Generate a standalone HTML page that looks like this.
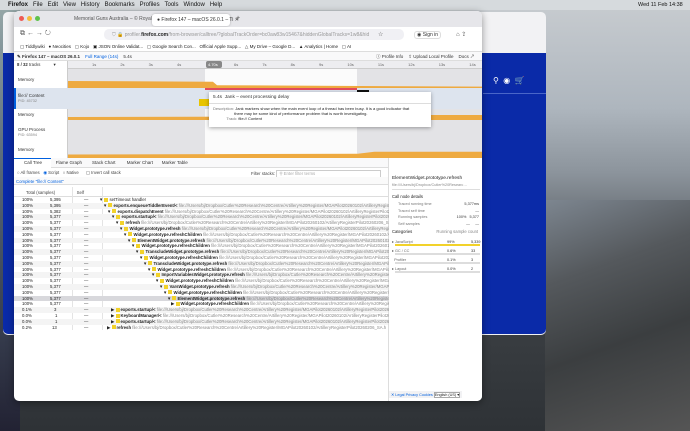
<!DOCTYPE html><html><head><meta charset="utf-8"><style>
*{margin:0;padding:0;box-sizing:border-box}
body{width:690px;height:431px;overflow:hidden;position:relative;font-family:"Liberation Sans",sans-serif;background:#3a3f44}
.a{position:absolute}
.t{font-size:5px;color:#333;white-space:nowrap}
.row{position:absolute;left:0;width:374px;height:5.8px;font-size:4.3px;line-height:5.8px;white-space:nowrap;color:#222}
.row span{position:absolute}
.sq{display:inline-block;width:4px;height:4px;background:#f2d22a;vertical-align:-0.5px;margin-right:1px}
.path{color:#888}
</style></head><body>
<div class="a" style="left:0;top:0;width:690px;height:431px;background:linear-gradient(180deg,#c8ccd0 0%,#aeb6be 25%,#8c949c 40%,#5e646a 55%,#3a3e42 75%,#2e3236 100%)"></div>
<div class="a" style="left:545px;top:200px;width:145px;height:231px;background:linear-gradient(160deg,#7d8690 0%,#55595d 30%,#3b3e40 60%,#555 100%)"></div>
<div class="a" style="left:0;top:0;width:20px;height:431px;background:linear-gradient(180deg,#9aa 0%,#567 40%,#223 100%)"></div>
<div class="a" style="left:0;top:0;width:690px;height:10px;background:#d6dadd"></div>
<div class="a t" style="left:8px;top:2px;font-size:6px;color:#111"> <b>Firefox</b>&nbsp;&nbsp; File&nbsp;&nbsp; Edit&nbsp;&nbsp; View&nbsp;&nbsp; History&nbsp;&nbsp; Bookmarks&nbsp;&nbsp; Profiles&nbsp;&nbsp; Tools&nbsp;&nbsp; Window&nbsp;&nbsp; Help</div>
<div class="a t" style="left:638px;top:2px;font-size:5.5px;color:#111">Wed 11 Feb 14:38</div>
<div class="a" style="left:3px;top:12px;width:543px;height:323px;background:#f2f2f4;border-radius:5px"></div>
<div class="a" style="left:3px;top:53px;width:543px;height:281px;background:#0a2aa8;border-radius:0 0 5px 5px"></div>
<div class="a" style="left:483px;top:93px;width:63px;height:1px;background:#4a66c8"></div>
<div class="a t" style="left:493px;top:76px;font-size:8px;color:#fff">⚲ &nbsp;◉ &nbsp;🛒</div>
<div class="a" style="left:14px;top:11px;width:468px;height:390px;background:#fff;border-radius:5px;overflow:hidden;box-shadow:0 2px 8px rgba(0,0,0,.4)">
 <div class="a" style="left:0;top:0;width:468px;height:16px;background:#e6e6ea"></div>
 <div class="a" style="left:5px;top:5px;width:5px;height:5px;border-radius:50%;background:#ee5b55"></div>
 <div class="a" style="left:13px;top:5px;width:5px;height:5px;border-radius:50%;background:#f5bd3a"></div>
 <div class="a" style="left:21px;top:5px;width:5px;height:5px;border-radius:50%;background:#5fc24c"></div>
 <div class="a t" style="left:60px;top:5px;color:#555">Memorial Guns Australia – © Royal ✕</div>
 <div class="a" style="left:138px;top:3px;width:78px;height:12px;background:#fff;border-radius:3px;box-shadow:0 0 2px #aaa"></div>
 <div class="a t" style="left:143px;top:6px">● Firefox 147 – macOS 26.0.1 – Ti ✕</div>
 <div class="a t" style="left:222px;top:4px;font-size:7px;color:#555">+</div>
 <div class="a" style="left:0;top:16px;width:468px;height:15px;background:#fff"></div>
 <div class="a t" style="left:6px;top:19px;font-size:7px;color:#555">⧉ ← → ↻</div>
 <div class="a" style="left:90px;top:18px;width:300px;height:11px;background:#f0f0f4;border-radius:5px"></div>
 <div class="a t" style="left:98px;top:21px;color:#999">⛉ 🔒 profiler.<b style="color:#222">firefox.com</b>/from-browser/calltree/?globalTrackOrder=bc0aw83w15467&amp;hiddenGlobalTracks=1w8&amp;hid</div>
 <div class="a t" style="left:364px;top:20px;font-size:6px;color:#555">☆</div>
 <div class="a t" style="left:400px;top:20px;color:#333;border:1px solid #ddd;border-radius:3px;padding:0 2px">◉ Sign in</div>
 <div class="a t" style="left:442px;top:20px;font-size:6px;color:#555">⌂ ⇪</div>
 <div class="a" style="left:0;top:31px;width:468px;height:10px;background:#fff;border-bottom:1px solid #ddd"></div>
 <div class="a t" style="left:6px;top:33px;font-size:4.5px;color:#222">▢ Tiddlywiki &nbsp; ● Neocities &nbsp; ▢ Kojo &nbsp; ▣ JSON Online Validat... &nbsp; ▢ Google Search Con... &nbsp;  Official Apple Supp... &nbsp; △ My Drive – Google D... &nbsp; ▲ Analytics | Home &nbsp; ▢ AI</div>
 <div class="a" style="left:0;top:41px;width:468px;height:9px;background:#f9f9fa;border-bottom:1px solid #ddd"></div>
 <div class="a t" style="left:3px;top:43px;font-size:4.5px"><b>✎ Firefox 147 – macOS 26.0.1</b> &nbsp;&nbsp; <span style="color:#0060df">Full Range (14s)</span> &nbsp;&nbsp; 5.4s</div>
 <div class="a t" style="left:362px;top:43px;font-size:4.5px">ⓘ Profile Info &nbsp;&nbsp; ⇪ Upload Local Profile &nbsp;&nbsp; Docs ↗</div>
 <div class="a" style="left:0;top:50px;width:468px;height:97px;background:#e3e3e6"></div>
 <div class="a" style="left:0;top:50px;width:54px;height:97px;background:#fff;border-right:1px solid #ccc"></div>
 <div class="a" style="left:54px;top:50px;width:414px;height:8px;background:#ededf0;border-bottom:1px solid #ccc"></div>
 <div class="a t" style="left:3px;top:51px;font-size:4.3px"><b>8 / 32</b> tracks &nbsp;&nbsp;&nbsp;&nbsp;&nbsp;&nbsp;&nbsp;&nbsp;&nbsp; ▾</div>
 <div class="a t" style="left:78px;top:51px;font-size:4px;color:#666;word-spacing:23px">1s 2s 3s 4s</div>
 <div class="a" style="left:191px;top:58px;width:152px;height:89px;background:#fbfbfb"></div>
 <div class="a" style="left:192px;top:50px;width:16px;height:7px;background:#888;border-radius:2px"></div>
 <div class="a t" style="left:194px;top:51px;font-size:4px;color:#fff">4.70s</div>
 <div class="a t" style="left:220px;top:51px;font-size:4px;color:#666;word-spacing:23px">6s 7s 8s 9s 10s 11s 12s 13s 14s</div>
 <div class="a" style="left:0;top:77px;width:468px;height:21px;background:#dde4ee"></div>
 <div class="a" style="left:0;top:77px;width:2px;height:21px;background:#0060df"></div>
 <div class="a t" style="left:4px;top:66px;font-size:4.5px">Memory</div>
 <div class="a t" style="left:4px;top:82px;font-size:4.5px">file:// Content<br><span style="color:#888;font-size:3.8px">PID: 45732</span></div>
 <div class="a t" style="left:4px;top:101px;font-size:4.5px">Memory</div>
 <div class="a t" style="left:4px;top:116px;font-size:4.5px">GPU Process<br><span style="color:#888;font-size:3.8px">PID: 63594</span></div>
 <div class="a t" style="left:4px;top:136px;font-size:4.5px">Memory</div>
 <div class="a" style="left:54px;top:70px;width:414px;height:7px;background:#eeaa40;clip-path:polygon(0 0,35% 10%,36% 60%,100% 80%,100% 100%,0 100%)"></div>
 <div class="a" style="left:54px;top:104px;width:414px;height:5px;background:#eeaa40;clip-path:polygon(0 40%,60% 30%,62% 0,100% 0,100% 100%,0 100%)"></div>
 <div class="a" style="left:54px;top:140px;width:414px;height:7px;background:#eeaa40;clip-path:polygon(0 50%,70% 40%,74% 10%,100% 10%,100% 100%,0 100%)"></div>
 <div class="a" style="left:191px;top:77px;width:152px;height:2px;background:#e34b5c"></div>
 <div class="a" style="left:185px;top:88px;width:10px;height:7px;background:#e8c400"></div>
 <div class="a" style="left:343px;top:79px;width:12px;height:2px;background:#111"></div>
 <div class="a" style="left:195px;top:81px;width:222px;height:35px;background:#fff;box-shadow:0 1px 4px rgba(0,0,0,.35)"></div>
 <div class="a t" style="left:199px;top:84px;font-size:4.8px">5.4s &nbsp;Jank – event processing delay</div>
 <div class="a" style="left:195px;top:92px;width:222px;height:1px;background:#ddd"></div>
 <div class="a t" style="left:199px;top:95px;font-size:4px;line-height:5px;color:#222"><span style="color:#777">Description:</span> Jank markers show when the main event loop of a thread has been busy. It is a good indicator that<br>&nbsp;&nbsp;&nbsp;&nbsp;&nbsp;&nbsp;&nbsp;&nbsp;&nbsp;&nbsp;&nbsp;&nbsp;&nbsp;&nbsp;&nbsp;&nbsp;&nbsp;&nbsp; there may be some kind of performance problem that is worth investigating.<br>&nbsp;&nbsp;&nbsp;&nbsp;&nbsp;&nbsp;&nbsp;&nbsp;&nbsp;&nbsp;&nbsp;&nbsp;<span style="color:#777">Track:</span> file:// Content</div>
 <div class="a" style="left:0;top:147px;width:374px;height:10px;background:#f9f9fa;border-bottom:1px solid #ddd"></div>
 <div class="a" style="left:0;top:147px;width:37px;height:10px;background:#fff;border-top:1px solid #0060df"></div>
 <div class="a t" style="left:10px;top:149px;font-size:4.5px">Call Tree &nbsp;&nbsp;&nbsp;&nbsp;&nbsp;&nbsp;&nbsp;&nbsp;&nbsp; Flame Graph &nbsp;&nbsp;&nbsp;&nbsp;&nbsp;&nbsp; Stack Chart &nbsp;&nbsp;&nbsp;&nbsp;&nbsp;&nbsp;&nbsp; Marker Chart &nbsp;&nbsp;&nbsp;&nbsp;&nbsp; Marker Table</div>
 <div class="a t" style="left:3px;top:159px;font-size:4.3px;color:#444">○ All frames &nbsp; <span style="color:#0060df">◉</span> Script &nbsp; ○ Native &nbsp;&nbsp;&nbsp;&nbsp; ▢ Invert call stack</div>
 <div class="a t" style="left:237px;top:159px;font-size:4.3px;color:#444">Filter stacks: <span style="display:inline-block;width:105px;border:1px solid #ccc;color:#aaa;padding-left:2px">⚲ Enter filter terms</span></div>
 <div class="a" style="left:0;top:166px;width:374px;height:8px;background:#fafafa;border-bottom:1px solid #ddd"></div>
 <div class="a t" style="left:2px;top:168px;font-size:4.3px;color:#0060df">Complete "file:// Content"</div>
 <div class="a t" style="left:12px;top:179px;font-size:4.3px;color:#444">Total (samples) &nbsp;&nbsp;&nbsp;&nbsp;&nbsp;&nbsp;&nbsp;&nbsp;&nbsp;&nbsp;&nbsp;&nbsp;&nbsp;&nbsp;&nbsp;&nbsp; Self</div>
 <div class="a" style="left:0;top:185px;width:374px;height:1px;background:#ddd"></div>
 <div class="a" style="left:58px;top:176px;width:1px;height:143px;background:#e4e4e4"></div>
 <div class="a" style="left:88px;top:176px;width:1px;height:143px;background:#e4e4e4"></div>
 <div class="a" style="left:374px;top:147px;width:1px;height:243px;background:#ddd"></div>
 <div class="a" style="left:0;top:186px;width:374px;height:130px">
  <div class="row" style="top:0"><span style="left:8px">100%</span><span style="left:36px">5,395</span><span style="left:70px">—</span><span style="left:85px">▼ <i class="sq"></i>setTimeout handler</span></div>
  <div class="row" style="top:5.8px;background:#f4f4f4"><span style="left:8px">100%</span><span style="left:36px">5,395</span><span style="left:70px">—</span><span style="left:89px">▼ <i class="sq"></i><b>exports.enqueueTiddlerEvent/&lt;</b> <span class="path" style="position:static">file:///Users/bj/Dropbox/Cutler%20Research%20Centre/Artillery%20Register/MGAPilot20260102/ArtilleryRegister</span></span></div>
  <div class="row" style="top:11.6px"><span style="left:8px">100%</span><span style="left:36px">5,382</span><span style="left:70px">—</span><span style="left:93px">▼ <i class="sq"></i><b>exports.dispatchEvent</b> <span class="path" style="position:static">file:///Users/bj/Dropbox/Cutler%20Research%20Centre/Artillery%20Register/MGAPilot20260102/ArtilleryRegisterPilot20</span></span></div>
  <div class="row" style="top:17.4px;background:#f4f4f4"><span style="left:8px">100%</span><span style="left:36px">5,377</span><span style="left:70px">—</span><span style="left:97px">▼ <i class="sq"></i><b>exports.startup/&lt;</b> <span class="path" style="position:static">file:///Users/bj/Dropbox/Cutler%20Research%20Centre/Artillery%20Register/MGAPilot20260102/ArtilleryRegisterPilot2026</span></span></div>
  <div class="row" style="top:23.2px"><span style="left:8px">100%</span><span style="left:36px">5,377</span><span style="left:70px">—</span><span style="left:101px">▼ <i class="sq"></i><b>refresh</b> <span class="path" style="position:static">file:///Users/bj/Dropbox/Cutler%20Research%20Centre/Artillery%20Register/MGAPilot20260102/ArtilleryRegisterPilot20260206_S</span></span></div>
  <div class="row" style="top:29px;background:#f4f4f4"><span style="left:8px">100%</span><span style="left:36px">5,377</span><span style="left:70px">—</span><span style="left:105px">▼ <i class="sq"></i><b>Widget.prototype.refresh</b> <span class="path" style="position:static">file:///Users/bj/Dropbox/Cutler%20Research%20Centre/Artillery%20Register/MGAPilot20260102/ArtilleryRegiste</span></span></div>
  <div class="row" style="top:34.8px"><span style="left:8px">100%</span><span style="left:36px">5,377</span><span style="left:70px">—</span><span style="left:109px">▼ <i class="sq"></i><b>Widget.prototype.refreshChildren</b> <span class="path" style="position:static">file:///Users/bj/Dropbox/Cutler%20Research%20Centre/Artillery%20Register/MGAPilot20260102/Arti</span></span></div>
  <div class="row" style="top:40.6px;background:#f4f4f4"><span style="left:8px">100%</span><span style="left:36px">5,377</span><span style="left:70px">—</span><span style="left:113px">▼ <i class="sq"></i><b>ElementWidget.prototype.refresh</b> <span class="path" style="position:static">file:///Users/bj/Dropbox/Cutler%20Research%20Centre/Artillery%20Register/MGAPilot20260102/A</span></span></div>
  <div class="row" style="top:46.4px"><span style="left:8px">100%</span><span style="left:36px">5,377</span><span style="left:70px">—</span><span style="left:117px">▼ <i class="sq"></i><b>Widget.prototype.refreshChildren</b> <span class="path" style="position:static">file:///Users/bj/Dropbox/Cutler%20Research%20Centre/Artillery%20Register/MGAPilot20260102/</span></span></div>
  <div class="row" style="top:52.2px;background:#f4f4f4"><span style="left:8px">100%</span><span style="left:36px">5,377</span><span style="left:70px">—</span><span style="left:121px">▼ <i class="sq"></i><b>TranscludeWidget.prototype.refresh</b> <span class="path" style="position:static">file:///Users/bj/Dropbox/Cutler%20Research%20Centre/Artillery%20Register/MGAPilot2026</span></span></div>
  <div class="row" style="top:58px"><span style="left:8px">100%</span><span style="left:36px">5,377</span><span style="left:70px">—</span><span style="left:125px">▼ <i class="sq"></i><b>Widget.prototype.refreshChildren</b> <span class="path" style="position:static">file:///Users/bj/Dropbox/Cutler%20Research%20Centre/Artillery%20Register/MGAPilot20260</span></span></div>
  <div class="row" style="top:63.8px;background:#f4f4f4"><span style="left:8px">100%</span><span style="left:36px">5,377</span><span style="left:70px">—</span><span style="left:129px">▼ <i class="sq"></i><b>TranscludeWidget.prototype.refresh</b> <span class="path" style="position:static">file:///Users/bj/Dropbox/Cutler%20Research%20Centre/Artillery%20Register/MGAPilot</span></span></div>
  <div class="row" style="top:69.6px"><span style="left:8px">100%</span><span style="left:36px">5,377</span><span style="left:70px">—</span><span style="left:133px">▼ <i class="sq"></i><b>Widget.prototype.refreshChildren</b> <span class="path" style="position:static">file:///Users/bj/Dropbox/Cutler%20Research%20Centre/Artillery%20Register/MGAPilot</span></span></div>
  <div class="row" style="top:75.4px;background:#f4f4f4"><span style="left:8px">100%</span><span style="left:36px">5,377</span><span style="left:70px">—</span><span style="left:137px">▼ <i class="sq"></i><b>ImportVariablesWidget.prototype.refresh</b> <span class="path" style="position:static">file:///Users/bj/Dropbox/Cutler%20Research%20Centre/Artillery%20Register/MGA</span></span></div>
  <div class="row" style="top:81.2px"><span style="left:8px">100%</span><span style="left:36px">5,377</span><span style="left:70px">—</span><span style="left:141px">▼ <i class="sq"></i><b>Widget.prototype.refreshChildren</b> <span class="path" style="position:static">file:///Users/bj/Dropbox/Cutler%20Research%20Centre/Artillery%20Register/MGA</span></span></div>
  <div class="row" style="top:87px;background:#f4f4f4"><span style="left:8px">100%</span><span style="left:36px">5,377</span><span style="left:70px">—</span><span style="left:145px">▼ <i class="sq"></i><b>VarsWidget.prototype.refresh</b> <span class="path" style="position:static">file:///Users/bj/Dropbox/Cutler%20Research%20Centre/Artillery%20Register/MGAPilot2</span></span></div>
  <div class="row" style="top:92.8px"><span style="left:8px">100%</span><span style="left:36px">5,377</span><span style="left:70px">—</span><span style="left:149px">▼ <i class="sq"></i><b>Widget.prototype.refreshChildren</b> <span class="path" style="position:static">file:///Users/bj/Dropbox/Cutler%20Research%20Centre/Artillery%20Register/MGA</span></span></div>
  <div class="row" style="top:98.6px;background:#d8d8dc"><span style="left:8px">100%</span><span style="left:36px">5,377</span><span style="left:70px">—</span><span style="left:153px">▼ <i class="sq"></i><b>ElementWidget.prototype.refresh</b> <span class="path" style="position:static">file:///Users/bj/Dropbox/Cutler%20Research%20Centre/Artillery%20Register/MG</span></span></div>
  <div class="row" style="top:104.4px"><span style="left:8px">100%</span><span style="left:36px">5,377</span><span style="left:70px">—</span><span style="left:157px">▶ <i class="sq"></i><b>Widget.prototype.refreshChildren</b> <span class="path" style="position:static">file:///Users/bj/Dropbox/Cutler%20Research%20Centre/Artillery%20Register/M</span></span></div>
  <div class="row" style="top:110.2px;background:#f4f4f4"><span style="left:8px">0.1%</span><span style="left:40px">3</span><span style="left:70px">—</span><span style="left:97px">▶ <i class="sq"></i><b>exports.startup/&lt;</b> <span class="path" style="position:static">file:///Users/bj/Dropbox/Cutler%20Research%20Centre/Artillery%20Register/MGAPilot20260102/ArtilleryRegisterPilot2026</span></span></div>
  <div class="row" style="top:116px"><span style="left:8px">0.0%</span><span style="left:41px">1</span><span style="left:70px">—</span><span style="left:97px">▶ <i class="sq"></i><b>KeyboardManager/&lt;</b> <span class="path" style="position:static">file:///Users/bj/Dropbox/Cutler%20Research%20Centre/Artillery%20Register/MGAPilot20260102/ArtilleryRegisterPilot20</span></span></div>
  <div class="row" style="top:121.8px;background:#f4f4f4"><span style="left:8px">0.0%</span><span style="left:41px">1</span><span style="left:70px">—</span><span style="left:97px">▶ <i class="sq"></i><b>exports.startup/&lt;</b> <span class="path" style="position:static">file:///Users/bj/Dropbox/Cutler%20Research%20Centre/Artillery%20Register/MGAPilot20260102/ArtilleryRegisterPilot2026</span></span></div>
  <div class="row" style="top:127.6px"><span style="left:8px">0.2%</span><span style="left:38px">13</span><span style="left:70px">—</span><span style="left:93px">▶ <i class="sq"></i><b>refresh</b> <span class="path" style="position:static">file:///Users/bj/Dropbox/Cutler%20Research%20Centre/Artillery%20Register/MGAPilot20260102/ArtilleryRegisterPilot20260206_SA.h</span></span></div>
 </div>
 <div class="a" style="left:375px;top:147px;width:93px;height:243px;background:#fff;overflow:hidden">
  <div class="a t" style="left:3px;top:18px;font-size:4.8px;color:#222">ElementWidget.prototype.refresh</div>
  <div class="a t" style="left:3px;top:25px;font-size:3.8px;color:#888">file:///Users/bj/Dropbox/Cutler%20Researc…</div>
  <div class="a" style="left:3px;top:31px;width:88px;height:1px;background:#ddd"></div>
  <div class="a t" style="left:3px;top:36px;font-size:4.2px;color:#222">Call node details</div>
  <div class="a t" style="left:9px;top:43px;font-size:3.8px;line-height:6.7px;color:#777">Traced running time<br>Traced self time<br>Running samples<br>Self samples</div>
  <div class="a t" style="left:60px;top:43px;font-size:3.8px;line-height:6.7px;color:#333;text-align:right;width:30px">5,377ms<br>—<br>100% &nbsp; 5,377<br>— &nbsp;&nbsp;&nbsp; —</div>
  <div class="a t" style="left:3px;top:71px;font-size:4.2px;color:#222">Categories <span style="color:#888;margin-left:23px">Running sample count</span></div>
  <div class="a t" style="left:3px;top:80px;font-size:3.8px;line-height:9px;color:#666;width:88px">▸ JavaScript<br>▸ GC / CC<br>&nbsp; Profiler<br>▸ Layout</div>
  <div class="a t" style="left:58px;top:80px;font-size:3.8px;line-height:9px;color:#333">99%<br>0.6%<br>0.1%<br>0.0%</div>
  <div class="a t" style="left:82px;top:80px;font-size:3.8px;line-height:9px;color:#333">5,339<br>33<br>3<br>2</div>
  <div class="a" style="left:6px;top:86px;width:85px;height:2px;background:#f2d22a"></div>
  <div class="a" style="left:6px;top:95px;width:85px;height:2px;background:#ddd"></div>
  <div class="a" style="left:6px;top:104px;width:85px;height:2px;background:#ddd"></div>
  <div class="a" style="left:6px;top:113px;width:85px;height:2px;background:#ddd"></div>
 </div>
 <div class="a t" style="left:375px;top:380px;font-size:3.8px;color:#0060df;background:#f2f2f4;padding:1px 2px">✕ Legal Privacy Cookies <span style="color:#222;border:1px solid #aaa;background:#fff">English (US) ▾</span></div>
</div>
</body></html>
